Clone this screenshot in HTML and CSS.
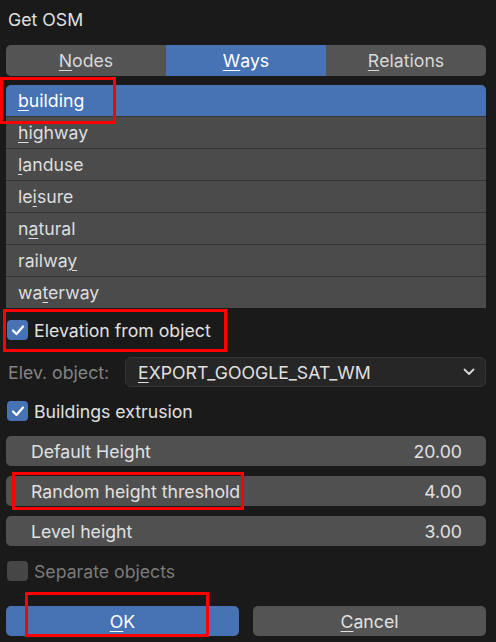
FILE: index.html
```html
<!DOCTYPE html>
<html>
<head>
<meta charset="utf-8">
<link rel="stylesheet" href="styles.css">
</head>
<body>
<div class="panel">
  <div class="title">Get OSM</div>
  <div class="tabs">
    <div class="tab"><u>N</u>odes</div>
    <div class="tab active"><u>W</u>ays</div>
    <div class="tab"><u>R</u>elations</div>
  </div>
  <div class="list">
    <div class="row selected"><u>b</u>uilding</div>
    <div class="row"><u>h</u>ighway</div>
    <div class="row"><u>l</u>anduse</div>
    <div class="row">le<u>i</u>sure</div>
    <div class="row">n<u>a</u>tural</div>
    <div class="row">railwa<u>y</u></div>
    <div class="row">wa<u>t</u>erway</div>
  </div>
  <div class="check-row">
    <span class="box on"><svg viewBox="0 0 20 20" width="20" height="20"><path d="M5 10.5 L8.5 14 L15 6.5" fill="none" stroke="#fff" stroke-width="2.2" stroke-linecap="round" stroke-linejoin="round"/></svg></span>
    <span class="label">Elevation from object</span>
  </div>
  <div class="select-row">
    <span class="muted">Elev. object:</span>
    <div class="select">
      <span><u>E</u>XPORT_GOOGLE_SAT_WM</span>
      <svg viewBox="0 0 12 8" width="12" height="8"><path d="M1.5 1.5 L6 6 L10.5 1.5" fill="none" stroke="#d8d8d8" stroke-width="1.8" stroke-linecap="round" stroke-linejoin="round"/></svg>
    </div>
  </div>
  <div class="check-row">
    <span class="box on"><svg viewBox="0 0 20 20" width="20" height="20"><path d="M5 10.5 L8.5 14 L15 6.5" fill="none" stroke="#fff" stroke-width="2.2" stroke-linecap="round" stroke-linejoin="round"/></svg></span>
    <span class="label">Buildings extrusion</span>
  </div>
  <div class="fields">
    <div class="field"><span>Default Height</span><span>20.00</span></div>
    <div class="field"><span>Random height threshold</span><span>4.00</span></div>
    <div class="field"><span>Level height</span><span>3.00</span></div>
  </div>
  <div class="check-row disabled">
    <span class="box"></span>
    <span class="label">Separate objects</span>
  </div>
  <div class="buttons">
    <div class="btn primary"><u>O</u>K</div>
    <div class="btn"><u>C</u>ancel</div>
  </div>
  <div class="mark m1"></div>
  <div class="mark m2"></div>
  <div class="mark m3"></div>
  <div class="mark m4"></div>
</div>
</body>
</html>
```

FILE: styles.css
```css
html, body {
  margin: 0;
  padding: 0;
  background: #1a1a1a;
}
body {
  width: 496px;
  height: 642px;
  overflow: hidden;
  font-family: Inter, "Noto Sans", "DejaVu Sans", sans-serif;
  font-size: 17.7px;
  color: #e0e0e0;
}
u {
  text-decoration: underline;
  text-decoration-thickness: 1px;
  text-underline-offset: 3px;
}
.panel {
  position: relative;
  padding: 8px 10px 0 6px;
  display: flex;
  flex-direction: column;
}
.title {
  height: 24px;
  line-height: 24px;
  padding-left: 2px;
}
.tabs {
  margin-top: 13px;
  display: flex;
  height: 31px;
  border-radius: 5px;
  overflow: hidden;
}
.tab {
  flex: 1;
  background: #545454;
  display: flex;
  align-items: center;
  justify-content: center;
  color: #d8d8d8;
}
.tab.active {
  background: #4772b3;
  color: #fff;
}
.list {
  margin-top: 9px;
  border-radius: 5px 5px 0 0;
  overflow: hidden;
  display: flex;
  flex-direction: column;
  background: #353535;
  gap: 1px;
}
.row {
  height: 31px;
  line-height: 31px;
  padding-left: 12px;
  background: #4b4b4b;
  color: #dedede;
}
.row.selected {
  background: #4772b3;
  color: #fff;
}
.check-row {
  display: flex;
  align-items: center;
  height: 30px;
  gap: 6px;
  padding-left: 1px;
}
.list + .check-row {
  margin-top: 7px;
}
.box {
  width: 21px;
  height: 20px;
  border-radius: 4px;
  background: #4e4e4e;
  display: flex;
  align-items: center;
  justify-content: center;
}
.box.on {
  background: #4772b3;
}
.check-row.disabled .label {
  color: #7a7a7a;
}
.check-row.disabled .box {
  background: #464646;
}
.select-row {
  margin-top: 12px;
  display: flex;
  align-items: center;
}
.muted {
  color: #848484;
  width: 119px;
  box-sizing: border-box;
  padding-left: 2px;
}
.select {
  flex: 1;
  height: 30px;
  box-sizing: border-box;
  border: 1px solid #333;
  border-radius: 6px;
  background: #262626;
  display: flex;
  align-items: center;
  justify-content: space-between;
  padding: 0 10px 0 12px;
  color: #e0e0e0;
}
.select-row + .check-row {
  margin-top: 9px;
}
.fields {
  margin-top: 10px;
  display: flex;
  flex-direction: column;
  gap: 10px;
}
.field {
  height: 30px;
  border-radius: 5px;
  background: #505050;
  display: flex;
  align-items: center;
  justify-content: space-between;
  padding: 0 24px 0 25px;
  color: #e0e0e0;
}
.fields + .check-row {
  margin-top: 10px;
}
.buttons {
  margin-top: 20px;
  display: flex;
  gap: 14px;
}
.btn {
  flex: 1;
  height: 30px;
  border-radius: 5px;
  background: #545454;
  display: flex;
  align-items: center;
  justify-content: center;
  color: #e0e0e0;
}
.btn.primary {
  background: #4772b3;
  color: #fff;
}
.mark {
  position: absolute;
  border: 3px solid #f00;
  box-sizing: border-box;
}
.m1 { left: 0; top: 77px; width: 116px; height: 47px; }
.m2 { left: 3px; top: 309px; width: 224px; height: 43px; }
.m3 { left: 12px; top: 472px; width: 232px; height: 38px; }
.m4 { left: 25px; top: 592px; width: 184px; height: 45px; }
```
